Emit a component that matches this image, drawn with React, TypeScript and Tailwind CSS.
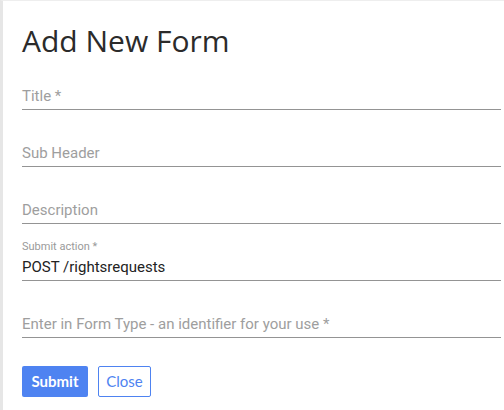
import React from "react";

function Field({ label, value, small }: { label?: string; value?: string; small?: string }) {
  return (
    <div className="h-[57px] flex flex-col justify-end border-b border-[#949494] pb-[3px]">
      {small && (
        <div className="text-[11px] leading-[13px] text-[#9a9a9a] mb-[4px]">{small}</div>
      )}
      {value ? (
        <div className="text-[15px] leading-[20px] text-[#222]">{value}</div>
      ) : (
        <div className="text-[15px] leading-[20px] text-[#9e9e9e]">{label}</div>
      )}
    </div>
  );
}

export default function App() {
  return (
    <div className="w-[504px] h-[410px] bg-white border-t border-t-[#eeeeee] border-l-[3px] border-l-[#e6e6e6] overflow-hidden">
      <div className="pl-[19px] pr-[3px] pt-[22px]" style={{ fontFamily: "Roboto, 'Liberation Sans', sans-serif" }}>
        <h1
          className="text-[30px] leading-[36px] text-[#2b2b2b] font-normal"
          style={{ fontFamily: "'Open Sans', 'Noto Sans', sans-serif" }}
        >
          Add New Form
        </h1>
        <div className="flex flex-col mt-[-6px]">
          <Field label="Title *" />
          <Field label="Sub Header" />
          <Field label="Description" />
          <Field small="Submit action *" value="POST /rightsrequests" />
          <Field label="Enter in Form Type - an identifier for your use *" />
        </div>
        <div className="flex gap-[10px] mt-[28px]" style={{ fontFamily: "Lato, 'Liberation Sans', sans-serif" }}>
          <button className="w-[66px] h-[31px] rounded-[2px] bg-[#4e83f1] text-white text-[15px] font-bold">
            Submit
          </button>
          <button className="w-[53px] h-[31px] rounded-[2px] bg-white border border-[#4e83f1] text-[#4e83f1] text-[15px]">
            Close
          </button>
        </div>
      </div>
    </div>
  );
}
